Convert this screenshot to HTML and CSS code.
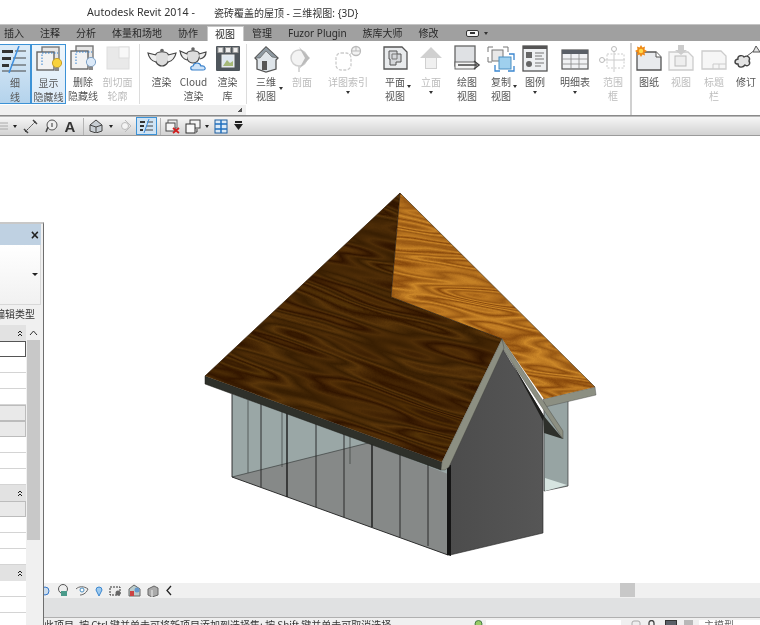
FILE: index.html
```html
<!DOCTYPE html>
<html lang="zh">
<head>
<meta charset="utf-8">
<title>Autodesk Revit 2014</title>
<link rel="stylesheet" href="styles.css">
</head>
<body>
<div class="app">
  <header class="titlebar"><span class="t1">Autodesk Revit 2014 -</span><span class="t2">瓷砖覆盖的屋顶 - 三维视图: {3D}</span></header>

  <nav class="tabs">
    <span class="tab">插入</span><span class="tab">注释</span><span class="tab">分析</span><span class="tab">体量和场地</span><span class="tab">协作</span><span class="tab active">视图</span><span class="tab">管理</span><span class="tab">Fuzor Plugin</span><span class="tab">族库大师</span><span class="tab">修改</span>
    <span class="tab-tool"><i class="tab-pill"><i class="tab-dot"></i></i><i class="caret"></i></span>
  </nav>

  <section class="ribbon">
    <div class="group g1">
      <div class="items i1">
        <div class="item w31 on">
          <svg class="ic" viewBox="0 0 30 28"><path d="M2 4h11v3H2zM2 11h9v3H2zM2 18h7v3H2z" fill="#333"/><path d="M15 5h11M13 12h13M11 19h15M2 25h24" stroke="#444" fill="none"/><path d="M19 0 9 27" stroke="#3d8fe0" stroke-width="1.5"/></svg>
          <span class="lb">细</span><span class="lb">线</span>
        </div>
        <div class="item w35 on2">
          <svg class="ic" viewBox="0 0 30 28"><rect x="8" y="1" width="17" height="18" fill="#e6e6e6" stroke="#777" stroke-width="1.4"/><rect x="3" y="6" width="17" height="18" fill="#f2f2f2" stroke="#666" stroke-width="1.4"/><path d="M8 19V7h16" stroke="#2f7fd0" stroke-dasharray="1.5 1.5" fill="none"/><circle cx="23" cy="17" r="4.6" fill="#f8d23c" stroke="#c7a02a"/><rect x="21" y="21.5" width="4" height="3.5" fill="#888"/></svg>
          <span class="lb">显示</span><span class="lb">隐藏线</span>
        </div>
        <div class="item w34">
          <svg class="ic" viewBox="0 0 30 28"><rect x="8" y="1" width="17" height="18" fill="#e6e6e6" stroke="#777" stroke-width="1.4"/><rect x="3" y="6" width="17" height="18" fill="#f2f2f2" stroke="#666" stroke-width="1.4"/><path d="M8 19V7h16" stroke="#2f7fd0" stroke-dasharray="1.5 1.5" fill="none"/><circle cx="23" cy="17" r="4.6" fill="#dbe9f8" stroke="#7fa3c8"/><rect x="21" y="21.5" width="4" height="3.5" fill="#888"/></svg>
          <span class="lb">删除</span><span class="lb">隐藏线</span>
        </div>
        <div class="item w35 off">
          <svg class="ic" viewBox="0 0 30 28"><rect x="4" y="2" width="22" height="22" fill="#e9e9e9" stroke="#ddd"/><rect x="16" y="2" width="10" height="11" fill="#f8f8f8" stroke="#ddd"/></svg>
          <span class="lb">剖切面</span><span class="lb">轮廓</span>
        </div>
      </div>
      <div class="sep-thin"></div>
      <div class="items i2">
        <div class="item w32">
          <svg class="ic" viewBox="0 0 30 28"><path d="M9 9c2-3 10-3 12 0 3 5-1 12-6 12S6 14 9 9z" fill="#ddd" stroke="#444" stroke-width="1.200"/><path d="M9 10 1 8c1 6 4 8 8 9M21 10l8-2c-1 5-4 8-8 9" fill="#eee" stroke="#444" stroke-width="1.200"/><circle cx="15" cy="5.500" r="1.800" fill="#666"/></svg>
          <span class="lb">渲染</span>
        </div>
        <div class="item w32">
          <svg class="ic" viewBox="0 0 30 28"><path d="M8 8c2-3 10-3 12 0 2 4-1 10-6 10S6 12 8 8z" fill="#ddd" stroke="#444" stroke-width="1.200"/><path d="M8 9 1 6c1 6 3 8 7 9M20 9l7-2c0 3-2 6-6 7" fill="#eee" stroke="#444" stroke-width="1.200"/><circle cx="14" cy="4" r="1.800" fill="#666"/><path d="M14 25c-3 0-3-4 0-4 1-4 7-4 8 0 4-1 6 4 2 4z" fill="#cfe3f7" stroke="#3a82cc" stroke-width="1.200"/></svg>
          <span class="lb">Cloud</span><span class="lb">渲染</span>
        </div>
        <div class="item w36">
          <svg class="ic" viewBox="0 0 30 28"><rect x="3" y="1" width="24" height="25" rx="1" fill="#4f565c"/><rect x="5" y="2.5" width="5" height="5" fill="#eee" stroke="#999"/><rect x="12.500" y="2.500" width="5" height="5" fill="#eee" stroke="#999"/><rect x="20" y="2.500" width="5" height="5" fill="#eee" stroke="#999"/><rect x="9" y="10" width="12" height="12" fill="#dfe8f0" stroke="#eee"/><path d="M10 21l4-6 3 3 3-2v5z" fill="#a6b978"/></svg>
          <span class="lb">渲染</span><span class="lb">库</span>
        </div>
      </div>
      <div class="sep-thin"></div>
      <i class="launcher"></i>
    </div>

    <div class="group g2">
      <div class="item w32">
        <svg class="ic" viewBox="0 0 30 28"><path d="M4 13 15 2l12 11-2 2v9l-10 3-9-3v-9z" fill="#dfe5ea" stroke="#555" stroke-width="1.300"/><path d="M4 13 15 2l12 11-6-1-6-6-6 7z" fill="#8f9aa2" stroke="#555" stroke-width=".6"/><rect x="11" y="16" width="5" height="9" fill="#555"/></svg>
        <span class="lb">三维</span><span class="lb">视图</span><i class="caret side s1"></i>
      </div>
      <div class="item w40 off">
        <svg class="ic" viewBox="0 0 30 28"><circle cx="12" cy="13" r="8" fill="#f3f3f3" stroke="#cfcfcf" stroke-width="1.500"/><path d="M12 2l11 11-11 11 6-11z" fill="#bbb"/><path d="M12 21v6" stroke="#ccc" stroke-width="1.500"/></svg>
        <span class="lb">剖面</span>
      </div>
      <div class="item w52 off">
        <svg class="ic" viewBox="0 0 30 28"><rect x="3" y="8" width="15" height="17" rx="5" fill="none" stroke="#ccc" stroke-width="1.300" stroke-dasharray="3 1.500"/><circle cx="23" cy="6" r="4.500" fill="#f2f2f2" stroke="#bbb" stroke-width="1.300"/><path d="M18.500 6h9M23 1.500V6" stroke="#bbb"/><path d="M16 10l3-2" stroke="#ccc"/></svg>
        <span class="lb">详图索引</span><i class="caret under"></i>
      </div>
      <div class="item w42">
        <svg class="ic" viewBox="0 0 30 28"><path d="M4 2h18l5 5v17H4z" fill="#e9ebed" stroke="#555" stroke-width="1.300"/><path d="M9 6h8v3h4v8h-5v3H10v-6H9z" fill="#d5d7da" stroke="#555"/><path d="M12 9h5v5h-5z" fill="none" stroke="#777"/></svg>
        <span class="lb">平面</span><span class="lb">视图</span><i class="caret side s2"></i>
      </div>
      <div class="item w30 off">
        <svg class="ic" viewBox="0 0 30 28"><path d="M15 2l11 11h-5v11H9V13H4z" fill="#d0d0d0"/><rect x="10" y="13" width="10" height="10" fill="#f0f0f0"/></svg>
        <span class="lb">立面</span><i class="caret under"></i>
      </div>
      <div class="item w42">
        <svg class="ic" viewBox="0 0 30 28"><rect x="3" y="1" width="20" height="20" fill="#dfe1e4" stroke="#666" stroke-width="1.300"/><rect x="3" y="17" width="20" height="7" fill="#f4f4f4" stroke="#666"/><path d="M6 20h19M22 16l5 4-5 4" fill="none" stroke="#444" stroke-width="1.500"/></svg>
        <span class="lb">绘图</span><span class="lb">视图</span>
      </div>
      <div class="item w26">
        <svg class="ic" viewBox="0 0 30 28"><path d="M2 7V2h5M17 2h5v5M2 12v5h4" fill="none" stroke="#777"/><rect x="6" y="5" width="11" height="11" fill="#e8e8e8" stroke="#777"/><rect x="13" y="12" width="12" height="12" fill="#9fd0ee" stroke="#4a8fc2"/><path d="M9 20v6h5M22 26h6v-5M28 15V9h-5" fill="none" stroke="#3a86cf" stroke-width="1.300"/></svg>
        <span class="lb">复制</span><span class="lb">视图</span><i class="caret side s3"></i>
      </div>
      <div class="item w42">
        <svg class="ic" viewBox="0 0 30 28"><rect x="3" y="1" width="24" height="25" fill="#eef0f2" stroke="#555" stroke-width="1.300"/><rect x="3" y="1" width="24" height="3" fill="#555"/><rect x="6" y="7" width="6" height="6" fill="#666"/><circle cx="9" cy="19" r="3" fill="#666"/><path d="M15 8h9M15 11h7M15 14h9M15 18h9M15 21h6" stroke="#777"/></svg>
        <span class="lb">图例</span><i class="caret under"></i>
      </div>
      <div class="item w38">
        <svg class="ic" viewBox="0 0 30 28"><rect x="2" y="5" width="26" height="19" fill="#f1f2f4" stroke="#555" stroke-width="1.200"/><rect x="2" y="5" width="26" height="4" fill="#5a5f66"/><path d="M2 14h26M2 19h26M11 9v15M19 9v15" stroke="#888" stroke-width=".8"/></svg>
        <span class="lb">明细表</span><i class="caret under"></i>
      </div>
      <div class="item w38 off">
        <svg class="ic" viewBox="0 0 30 28"><rect x="9" y="9" width="17" height="14" fill="none" stroke="#ccc" stroke-dasharray="2 1.500"/><path d="M16 5v22M5 15h22" stroke="#ccc"/><circle cx="16" cy="4" r="2.500" fill="#fff" stroke="#bbb"/><circle cx="4" cy="15" r="2.500" fill="#fff" stroke="#bbb"/></svg>
        <span class="lb">范围</span><span class="lb">框</span>
      </div>
    </div>

    <div class="sep-thick"></div>

    <div class="group g3">
      <div class="item w32">
        <svg class="ic" viewBox="0 0 30 28"><path d="M3 7h19l5 5v13H3z" fill="#e8eaed" stroke="#555" stroke-width="1.300"/><path d="M22 7v5h5" fill="#fff" stroke="#555"/><path d="M7 0l1.500 2.500L11 1.500l-.5 3 2.500 1.500-2.500 1.500.5 3-2.500-1L7 12l-1.500-2.500L3 10.500l.5-3L1 6l2.500-1.500L3 1.500l2.500 1z" fill="#ef8a18"/><circle cx="7" cy="6" r="2.200" fill="#ffd84a"/></svg>
        <span class="lb">图纸</span>
      </div>
      <div class="item w32 off">
        <svg class="ic" viewBox="0 0 30 28"><path d="M3 7h19l5 5v13H3z" fill="#f6f6f6" stroke="#ccc" stroke-width="1.300"/><rect x="9" y="11" width="11" height="10" fill="#eee" stroke="#bbb"/><path d="M12 0h6v5h3l-6 5-6-5h3z" fill="#ccc"/></svg>
        <span class="lb">视图</span>
      </div>
      <div class="item w34 off">
        <svg class="ic" viewBox="0 0 30 28"><path d="M3 6h19l5 5v13H3z" fill="#f6f6f6" stroke="#ccc" stroke-width="1.300"/><path d="M14 24v-5h13M20 19v5" stroke="#ccc" fill="none"/></svg>
        <span class="lb">标题</span><span class="lb">栏</span>
      </div>
      <div class="item w30">
        <svg class="ic" viewBox="0 0 30 28"><path d="M7 14c-1-4 5-4 6-2 3-2 7 0 5 4 2 3-1 6-4 4-2 3-7 3-7-1-4 0-4-4 0-5z" fill="#e4e4e4" stroke="#444" stroke-width="1.400"/><path d="M16 11l8-6" stroke="#555"/><path d="M25 1l4 6h-7z" fill="#e4e4e4" stroke="#555"/></svg>
        <span class="lb">修订</span>
      </div>
    </div>
  </section>

  <section class="toolbar">
    <span class="tb"><svg width="9" height="12" viewBox="0 0 9 12"><path d="M0 3h8M0 6h8M0 9h8" stroke="#aaa"/></svg></span>
    <span class="tb"><i class="caret dark"></i></span>
    <span class="tb"><svg width="15" height="15" viewBox="0 0 15 15"><path d="M2 13 13 2" stroke="#333" stroke-dasharray="2 1"/><path d="M1 10l4 4M10 1l4 4" stroke="#444" stroke-width="1.500"/></svg></span>
    <span class="tb"><svg width="14" height="14" viewBox="0 0 14 14"><circle cx="8" cy="6" r="5" fill="#eee" stroke="#555"/><path d="M8 4v4" stroke="#333"/><path d="M2 13l2-5" stroke="#444" stroke-width="1.500"/></svg></span>
    <span class="tb big-a">A</span>
    <span class="tb"><i class="tsep"></i></span>
    <span class="tb"><svg width="14" height="14" viewBox="0 0 14 14"><path d="M1 6l6-5 6 5v6l-6 2-6-2z" fill="#c8ced3" stroke="#444"/><path d="M1 6l6 2 6-2M7 8v6" stroke="#444" fill="none"/></svg></span>
    <span class="tb"><i class="caret dark"></i></span>
    <span class="tb"><svg width="13" height="13" viewBox="0 0 13 13"><circle cx="6" cy="6" r="3.500" fill="#f4f4f4" stroke="#bbb"/><path d="M6 0l6 6-6 6" fill="none" stroke="#bbb"/></svg></span>
    <span class="tb"></span>
    <span class="tb tb-on"><svg width="15" height="14" viewBox="0 0 15 14"><path d="M1 2h5v2H1zM1 6h4v2H1zM1 10h3v2H1z" fill="#333"/><path d="M8 3h6M7 7h7M6 11h8" stroke="#444"/><path d="M10 0 5 14" stroke="#3d8fe0"/></svg></span>
    <span class="tb"><i class="tsep"></i></span>
    <span class="tb"><svg width="15" height="15" viewBox="0 0 15 15"><rect x="3" y="1" width="9" height="8" fill="#eee" stroke="#666"/><rect x="1" y="4" width="9" height="8" fill="#f6f6f6" stroke="#444"/><path d="M8 9l6 5M14 9l-6 5" stroke="#d02020" stroke-width="1.800"/></svg></span>
    <span class="tb"><svg width="16" height="15" viewBox="0 0 16 15"><rect x="5" y="1" width="10" height="8" fill="#f3f3f3" stroke="#444"/><rect x="1" y="5" width="9" height="9" fill="#f8f8f8" stroke="#333"/><path d="M12 10v3h-1" stroke="#444" fill="none"/></svg></span>
    <span class="tb"><i class="caret dark"></i></span>
    <span class="tb"><svg width="14" height="15" viewBox="0 0 14 15"><rect x="1" y="1" width="12" height="13" fill="#dbeaf7" stroke="#1f5f9f"/><path d="M7 1v13M1 5h12M1 10h12" stroke="#1f6fbf" stroke-width="1.500"/></svg></span>
    <span class="tb"><svg width="9" height="10" viewBox="0 0 9 10"><rect x="1" y="0" width="7" height="2" fill="#222"/><path d="M0 3h9L4.500 9z" fill="#222"/></svg></span>
  </section>

  <main class="stage">
    <svg class="scene" viewBox="0 136 760 447" width="760" height="447">
      <defs>
        <filter id="woodDark" x="0" y="0" width="100%" height="100%" color-interpolation-filters="sRGB">
          <feTurbulence type="fractalNoise" baseFrequency="0.006 0.05" numOctaves="2" seed="7"/>
          <feColorMatrix type="matrix" values="1 0 0 0 0 1 0 0 0 0 1 0 0 0 0 0 0 0 0 1"/>
          <feComponentTransfer>
            <feFuncR type="table" tableValues=".23 .23 .21 .31 .22 .33 .20 .35 .22 .31 .19 .33 .23 .31 .21 .30 .23 .23"/>
            <feFuncG type="table" tableValues=".11 .11 .09 .18 .11 .20 .09 .21 .12 .18 .08 .19 .12 .18 .10 .17 .11 .11"/>
            <feFuncB type="table" tableValues=".01 .01 0 .02 .01 .03 0 .04 .01 .03 0 .03 .01 .02 .01 .02 .01 .01"/>
          </feComponentTransfer>
        </filter>
        <filter id="woodLight" x="0" y="0" width="100%" height="100%" color-interpolation-filters="sRGB">
          <feTurbulence type="fractalNoise" baseFrequency="0.007 0.06" numOctaves="2" seed="3"/>
          <feColorMatrix type="matrix" values="1 0 0 0 0 1 0 0 0 0 1 0 0 0 0 0 0 0 0 1"/>
          <feComponentTransfer>
            <feFuncR type="table" tableValues=".60 .60 .55 .76 .58 .78 .56 .80 .60 .76 .54 .78 .60 .74 .56 .72 .60 .60"/>
            <feFuncG type="table" tableValues=".36 .36 .30 .49 .33 .51 .31 .53 .35 .49 .29 .51 .35 .47 .31 .46 .36 .36"/>
            <feFuncB type="table" tableValues=".09 .09 .06 .14 .07 .15 .06 .16 .08 .14 .05 .15 .08 .13 .06 .12 .09 .09"/>
          </feComponentTransfer>
        </filter>
        <clipPath id="clipDark"><polygon points="400,193 391,297 502,339 442,462 205,376"/></clipPath>
        <clipPath id="clipLight"><polygon points="400,193 595,387 544,399 502,339 391,297"/></clipPath>
        <linearGradient id="gable" x1="0" y1="0" x2="1" y2="0"><stop offset="0" stop-color="#4c4c4c"/><stop offset="1" stop-color="#565656"/></linearGradient>
      </defs>

      <!-- right wing -->
      <polygon points="544,404 568,400 568,486 544,491" fill="#97a4a3" stroke="#333" stroke-width=".7"/>
      <polygon points="545,478 567,485 545,491" fill="#d6e4e0"/>
      <polygon points="543,399 595,387 596,395 545,407" fill="#8c8f82" stroke="#444" stroke-width=".4"/>
      <g clip-path="url(#clipLight)">
        <rect x="340" y="130" width="320" height="320" transform="rotate(9 500 290)" filter="url(#woodLight)"/>
      </g>
      <path d="M400 193 595 387" stroke="#4a3a20" stroke-width=".7" fill="none"/>

      <!-- long glass wall -->
      <polygon points="232,394 448,467 448,555 232,477" fill="#9aa7a6"/>
      <polygon points="232,477 368,443 448,474 448,555" fill="#868988"/>
      <path d="M232 477 368 443M248 400v73M282 410v57M350 436v28" stroke="#3a3f3e" stroke-width=".7" fill="none"/>
      <path d="M232 394V477L448 555" stroke="#222" stroke-width=".9" fill="none"/>
      <path d="M261 404v83M316 423v84M344 433v84M400 454v83M428 464v82" stroke="#222" stroke-width=".9" fill="none"/>
      <path d="M287 413v84M372 444v83" stroke="#111" stroke-width="1.300" fill="none"/>

      <!-- gable wall -->
      <polygon points="449,465 502,348 543,415 543,533 450,555" fill="url(#gable)" stroke="#222" stroke-width=".6"/>
      <polygon points="447,465 451,465 451,556 447,555" fill="#151515"/>
      <polygon points="543,415 563,439 544,433" fill="#2e302b"/>
      <polygon points="502,344 504,349 544,416 543,421" fill="#1e1e1c"/>
      <polygon points="502,339 563,431 563,439 501,346" fill="#8c8f82" stroke="#3c3c38" stroke-width=".4"/>

      <!-- main roof -->
      <polygon points="205,376 442,462 441,470 205,384" fill="#2e302a" stroke="#1c1c18" stroke-width=".5"/>
      <g clip-path="url(#clipDark)">
        <rect x="140" y="130" width="450" height="380" transform="rotate(17 350 330)" filter="url(#woodDark)"/>
      </g>
      <polygon points="502,339 504,348 449,467 445,470 441,470 442,462" fill="#8c8f82" stroke="#3c3c38" stroke-width=".4"/>
      <path d="M205 376 400 193M400 193 391 297 502 339" stroke="#2a1500" stroke-width=".7" fill="none"/>
    </svg>
  </main>

  <section class="viewbar">
    <span class="vb-icons">
      <svg width="12" height="12" viewBox="0 0 12 12"><circle cx="6" cy="6" r="4" fill="#cde" stroke="#37c"/></svg>
      <svg width="12" height="13" viewBox="0 0 12 13"><circle cx="6" cy="5" r="4.500" fill="#eee" stroke="#555"/><rect x="4" y="7" width="6" height="5" fill="#4a9a8a"/></svg>
      <svg width="14" height="11" viewBox="0 0 14 11"><path d="M1 4c3-3 8-3 12 0-2 5-6 6-8 6" fill="none" stroke="#666"/><circle cx="7" cy="5" r="2" fill="#fff" stroke="#4a8fc2"/></svg>
      <svg width="8" height="12" viewBox="0 0 8 12"><path d="M4 11 1 5a3 3 0 1 1 6 0z" fill="#9cc9ee" stroke="#3a86cf"/></svg>
      <svg width="13" height="12" viewBox="0 0 13 12"><rect x="1" y="2" width="10" height="8" fill="#eee" stroke="#333" stroke-dasharray="2 1"/><circle cx="9" cy="8" r="2.500" fill="#666"/></svg>
      <svg width="13" height="13" viewBox="0 0 13 13"><path d="M1 5l5-4 6 4v7H1z" fill="#bcc" stroke="#666"/><rect x="2" y="7" width="4" height="5" fill="#c44"/><circle cx="9" cy="6" r="2.500" fill="#69c"/></svg>
      <svg width="12" height="12" viewBox="0 0 12 12"><path d="M1 4l6-3 4 2v7l-6 2-4-2z" fill="#aaa" stroke="#666"/><path d="M5 5v7" stroke="#eee"/></svg>
      <svg width="8" height="11" viewBox="0 0 8 11"><path d="M6 1 2 5.500 6 10" fill="none" stroke="#222" stroke-width="1.300"/></svg>
    </span>
    <i class="vb-thumb"></i>
  </section>

  <div class="graybar"></div>

  <footer class="status">
    <span class="st-text">此项目, 按 Ctrl 键并单击可将新项目添加到选择集; 按 Shift 键并单击可取消选择。</span>
    <svg class="st-ic" width="10" height="10" viewBox="0 0 10 10"><circle cx="4" cy="4" r="3.500" fill="#9c6" stroke="#474"/></svg>
    <span class="st-box"></span>
    <svg class="st-a" width="12" height="8" viewBox="0 0 12 8"><rect x="1" y="1" width="8" height="7" rx="2" fill="#eee" stroke="#aaa"/></svg>
    <svg class="st-b" width="12" height="8" viewBox="0 0 12 8"><path d="M3 8V3a2.500 2.500 0 0 1 5 0v5" fill="none" stroke="#444" stroke-width="1.300"/></svg>
    <span class="st-dark"></span>
    <span class="st-gray"></span>
    <span class="st-model">主模型</span>
  </footer>

  <aside class="panel">
    <div class="p-head"><span class="p-x">×</span></div>
    <div class="p-type"><i class="caret dark big"></i></div>
    <div class="p-edit"><span>编辑类型</span></div>
    <div class="p-body">
      <div class="p-rows">
        <div class="r sec"><svg class="dbl" width="6" height="7" viewBox="0 0 6 7"><path d="M1 3l2-2 2 2M1 6l2-2 2 2" fill="none" stroke="#222"/></svg></div>
        <div class="r input"></div>
        <div class="r"></div><div class="r"></div><div class="r"></div>
        <div class="r btn"></div><div class="r btn"></div>
        <div class="r"></div><div class="r"></div><div class="r"></div>
        <div class="r sec"><svg class="dbl" width="6" height="7" viewBox="0 0 6 7"><path d="M1 3l2-2 2 2M1 6l2-2 2 2" fill="none" stroke="#222"/></svg></div>
        <div class="r btn"></div>
        <div class="r"></div><div class="r"></div><div class="r"></div>
        <div class="r sec"><svg class="dbl" width="6" height="7" viewBox="0 0 6 7"><path d="M1 3l2-2 2 2M1 6l2-2 2 2" fill="none" stroke="#222"/></svg></div>
        <div class="r"></div><div class="r"></div><div class="r"></div>
      </div>
      <div class="p-scroll">
        <span class="p-up"><svg width="9" height="6" viewBox="0 0 9 6"><path d="M1 5l3.500-4L8 5" fill="none" stroke="#333"/></svg></span>
        <i class="p-thumb"></i>
      </div>
    </div>
  </aside>
</div>
</body>
</html>
```

FILE: styles.css
```css
* { box-sizing: border-box; }
html, body { margin: 0; padding: 0; background: #fff; }
body { font-family: "Noto Sans CJK SC", "Noto Sans", sans-serif; font-size: 10px; color: #444; }
i { display: block; font-style: normal; }

.app { position: relative; width: 760px; height: 625px; overflow: hidden; display: flex; flex-direction: column; filter: blur(.3px); }

/* title */
.titlebar { height: 24px; flex: none; display: flex; align-items: center; padding-left: 87px; font-family: "Noto Sans", "Noto Sans CJK SC", sans-serif; font-size: 10.700px; color: #333; background: #fff; white-space: nowrap; }
.t2 { margin-left: 19px; font-size: 10px; }

/* tabs */
.tabs { height: 17px; flex: none; display: flex; align-items: center; gap: 16px; padding-left: 4px; background: #a0a0a0; color: #2a2a2a; border-top: 1px solid #c4c4c4; white-space: nowrap; line-height: 16px; }
.tab { flex: none; }
.tab.active { background: #fff; align-self: flex-end; height: 15px; margin: 0 -8px 0 -7px; padding: 0 8px 0 7px; border: 1px solid #c8c8c8; border-bottom: 0; line-height: 14px; }
.tab:nth-child(8) { font-family: "Noto Sans", sans-serif; }
.tab-tool { display: flex; align-items: center; gap: 5px; margin-left: 11px; }
.tab-pill { width: 13px; height: 7px; background: #f4f4f4; border: 1px solid #333; border-radius: 2px; display: flex; align-items: center; justify-content: center; }
.tab-dot { width: 5px; height: 2px; background: #333; }

/* ribbon */
.ribbon { height: 75px; flex: none; display: flex; border-bottom: 1px solid #8a8a8a; background: #fff; }
.group { display: flex; position: relative; }
.g1 { width: 246px; background: linear-gradient(#fff 64px, #f0f0f0 64px); }
.g2 { width: 386px; padding: 0 0 0 4px; }
.g3 { flex: 1; padding-left: 1px; }
.items { display: flex; height: 64px; }
.i1 { padding-right: 4px; }
.i2 { padding-left: 6px; }
.sep-thin { width: 1px; height: 60px; margin-top: 3px; background: #dcdcdc; }
.sep-thick { width: 2px; flex: none; margin: 2px 0 0 -2px; background: #d0d0d0; }
.launcher { position: absolute; right: 4px; bottom: 3px; width: 5px; height: 5px; background: linear-gradient(135deg, transparent 50%, #555 50%); }

.item { position: relative; flex: none; display: flex; flex-direction: column; align-items: center; padding-top: 4px; color: #555; height: 63px; }
.ic { width: 30px; height: 28px; flex: none; margin-bottom: 2px; }
.lb { line-height: 14px; white-space: nowrap; }
.off { color: #bdbdbd; }
.w26 { width: 26px; } .w30 { width: 30px; } .w31 { width: 31px; } .w32 { width: 32px; } .w34 { width: 34px; } .w35 { width: 35px; } .w36 { width: 36px; } .w38 { width: 38px; } .w40 { width: 40px; } .w42 { width: 42px; } .w52 { width: 52px; }
.on { background: linear-gradient(#dcebf7, #b4d3ec); border: 1px solid #3c92d6; border-left: 0; margin-top: 3px; padding-top: 0; height: 60px; }
.on2 { background: linear-gradient(#eef6fc, #dcebf8); border: 1px solid #3c92d6; margin-top: 3px; padding-top: 0; height: 60px; }
.on .ic, .on2 .ic { margin-top: 1px; }

.caret { width: 0; height: 0; border-left: 2.500px solid transparent; border-right: 2.500px solid transparent; border-top: 3px solid #333; }
.caret.under { margin-top: 2px; }
.caret.side { position: absolute; }
.s1 { left: 29px; top: 46px; }
.s2 { left: 33px; top: 44px; }
.s3 { left: 25px; top: 44px; }
.caret.dark { border-top-color: #222; }
.caret.big { border-left-width: 3px; border-right-width: 3px; border-top-width: 3px; }

/* toolbar */
.toolbar { height: 20px; flex: none; display: grid; grid-template-columns: 9px 12px 19px 21px 18px 9px 16px 14px 14px 4px 21px 7px 17px 23px 5px 24px 11px; grid-template-rows: 18px; align-items: center; justify-items: center; background: linear-gradient(#f6f6f6, #d2d2d2); border-top: 1px solid #b8b8b8; border-bottom: 1px solid #9a9a9a; }
.tb { display: flex; align-items: center; justify-content: center; width: 100%; height: 18px; }
.tb-on { background: #cfe3f4; border: 1px solid #3c92d6; }
.tsep { width: 1px; height: 17px; background: #b4b4b4; }
.big-a { font-family: "Liberation Sans", sans-serif; font-weight: 700; font-size: 15px; color: #333; }

/* stage */
.stage { height: 447px; flex: none; background: #fff; }
.scene { display: block; }

/* bottom bars */
.viewbar { height: 15px; flex: none; display: flex; align-items: center; justify-content: space-between; padding: 0 125px 0 39px; background: #f0f0f0; }
.vb-icons { display: flex; align-items: center; gap: 6px; }
.vb-thumb { width: 15px; height: 14px; background: #c8c8c8; align-self: flex-start; }
.graybar { height: 19px; flex: none; background: #e0e1e2; }
.status { height: 8px; flex: none; display: flex; align-items: flex-start; overflow: hidden; background: #f0f0f0; border-top: 1px solid #b0b0b0; padding-left: 44px; color: #333; }
.st-text { width: 429px; flex: none; line-height: 10px; padding-top: 2px; white-space: nowrap; overflow: hidden; }
.st-ic { flex: none; margin-top: 2px; width: 13px; }
.st-box { width: 135px; height: 7px; margin-top: 2px; flex: none; background: #fff; }
.st-a { margin: 2px 0 0 10px; flex: none; }
.st-b { margin: 2px 0 0 3px; flex: none; }
.st-dark { width: 12px; height: 6px; margin: 2px 0 0 7px; flex: none; background: #5a6068; border: 1px solid #333; }
.st-gray { width: 9px; height: 6px; margin: 2px 0 0 7px; flex: none; background: #b8b8b8; }
.st-model { width: 62px; height: 7px; margin: 2px 0 0 6px; flex: none; background: #fff; padding-left: 5px; line-height: 10px; color: #666; }

/* properties panel */
.panel { position: absolute; left: 0; top: 222px; width: 44px; height: 403px; background: #f0f0f0; border-right: 1px solid #6e6e6e; border-top: 2px solid #c8c8c8; overflow: hidden; }
.p-head { height: 21px; width: 41px; background: #bfd1e2; display: flex; align-items: center; justify-content: flex-end; padding-right: 2px; }
.p-x { font-family: "Liberation Sans", sans-serif; font-weight: 700; font-size: 14px; line-height: 14px; color: #222; }
.p-type { height: 60px; width: 41px; background: linear-gradient(#fff, #f1f1f1); border-bottom: 1px solid #d8d8d8; border-right: 1px solid #d8d8d8; display: flex; align-items: center; justify-content: flex-end; padding-right: 2px; }
.p-edit { height: 20px; width: 35px; overflow: hidden; display: flex; justify-content: flex-end; white-space: nowrap; line-height: 18px; color: #333; }
.p-edit span { flex: none; }
.p-body { display: flex; }
.p-rows { width: 26px; flex: none; }
.r { height: 16px; background: #fff; border-bottom: 1px solid #d4d4d4; }
.r.sec { background: #e2e2e2; border-bottom: 0; display: flex; align-items: center; justify-content: flex-end; padding-right: 3px; }
.dbl { display: block; }
.r.input { background: #fff; border: 1px solid #555; border-left: 0; }
.r.btn { background: #e9e9e9; border: 1px solid #bcbcbc; border-left: 0; }
.p-scroll { width: 13px; margin-left: 1px; flex: none; }
.p-up { height: 15px; display: flex; align-items: center; justify-content: center; }
.p-thumb { height: 200px; background: #c8c8c8; }
```
